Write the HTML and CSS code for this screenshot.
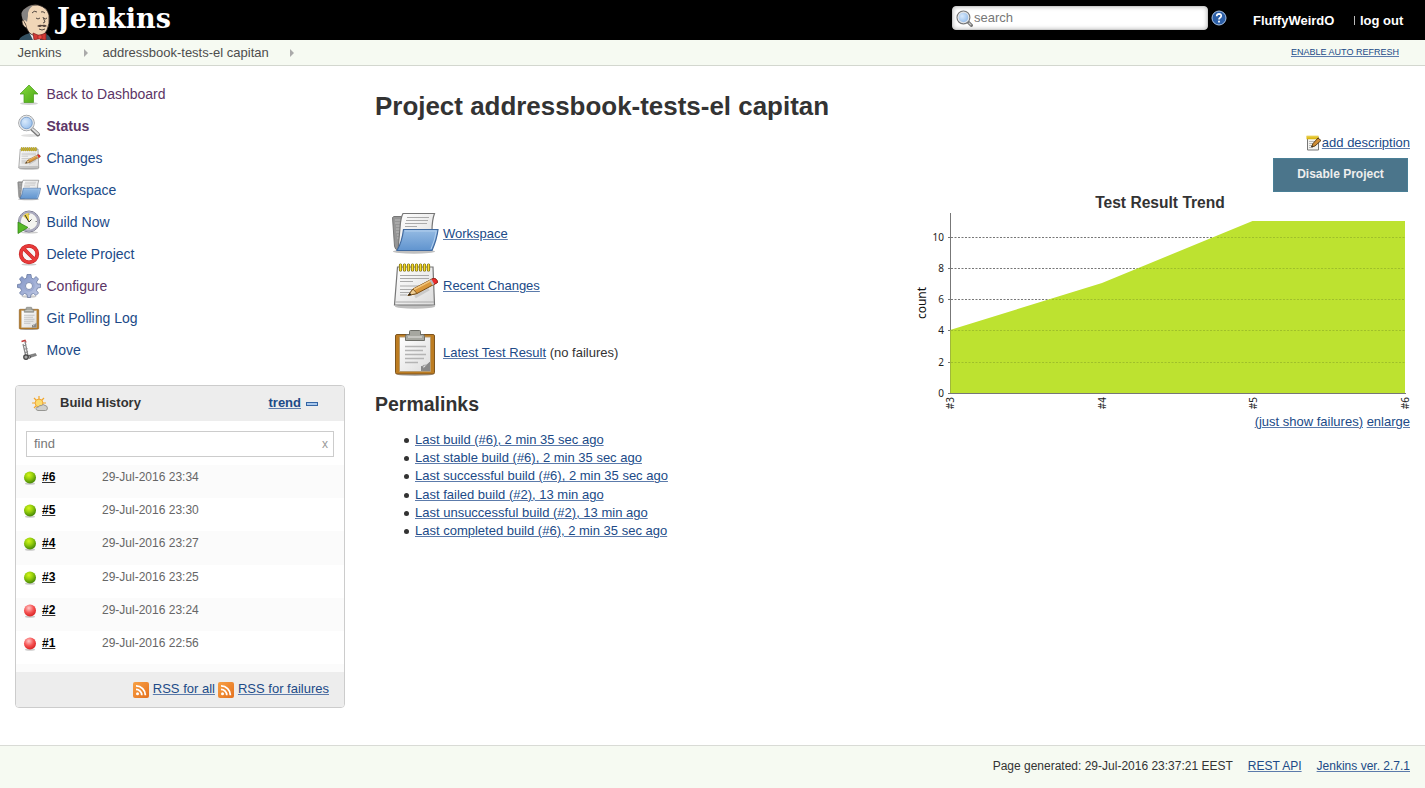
FILE: index.html
```html
<!DOCTYPE html>
<html lang="en">
<head>
<meta charset="utf-8">
<title>addressbook-tests-el capitan [Jenkins]</title>
<link rel="stylesheet" href="styles.css">
</head>
<body>
<svg class="defs" width="0" height="0" aria-hidden="true">
  <defs>
    <linearGradient id="paper" x1="0" y1="0" x2="1" y2="1"><stop offset="0" stop-color="#fff"/><stop offset="1" stop-color="#dcdcdc"/></linearGradient>
    <linearGradient id="folderBlue" x1="0" y1="0" x2="0" y2="1"><stop offset="0" stop-color="#95bbe3"/><stop offset="1" stop-color="#6094cf"/></linearGradient>
    <linearGradient id="arrowGreen" x1="0" y1="0" x2="1" y2="1"><stop offset="0" stop-color="#86dc3a"/><stop offset="1" stop-color="#4aa616"/></linearGradient>
    <linearGradient id="gearBlue" x1="0" y1="0" x2="1" y2="1"><stop offset="0" stop-color="#7d91c4"/><stop offset="1" stop-color="#c3cce6"/></linearGradient>
    <linearGradient id="rssOrange" x1="0" y1="0" x2="1" y2="1"><stop offset="0" stop-color="#f8a145"/><stop offset="1" stop-color="#e4701e"/></linearGradient>
    <radialGradient id="ballGreen" cx=".4" cy=".3" r=".65"><stop offset="0" stop-color="#d5f51c"/><stop offset=".5" stop-color="#96cf0c"/><stop offset="1" stop-color="#4f8f08"/></radialGradient>
    <radialGradient id="ballRed" cx=".4" cy=".3" r=".65"><stop offset="0" stop-color="#ffc9c9"/><stop offset=".6" stop-color="#f65454"/><stop offset="1" stop-color="#dd2b2b"/></radialGradient>
    <radialGradient id="lens" cx=".4" cy=".4" r=".6"><stop offset="0" stop-color="#d9eafc"/><stop offset="1" stop-color="#8db8ea"/></radialGradient>

    <symbol id="i-up" viewBox="0 0 48 48">
      <ellipse cx="24" cy="43" rx="18" ry="3" fill="#000" opacity=".18"/>
      <path d="M24 6 42 24H33V41H14V24H6Z" fill="url(#arrowGreen)" stroke="#4c9d20" stroke-width="1.500" stroke-linejoin="round"/>
    </symbol>
    <symbol id="i-search" viewBox="0 0 48 48">
      <ellipse cx="27" cy="43" rx="19" ry="3" fill="#000" opacity=".12"/>
      <path d="M30 30 42 41" stroke="#777" stroke-width="8" stroke-linecap="round"/>
      <path d="M31 30 42 40" stroke="#ddd" stroke-width="4" stroke-linecap="round"/>
      <circle cx="19" cy="18" r="15.500" fill="url(#lens)" stroke="#999" stroke-width="2"/>
      <circle cx="19" cy="18" r="13.500" fill="none" stroke="#e6e6e6" stroke-width="3"/>
      <circle cx="19" cy="18" r="11.500" fill="none" stroke="#7297c4" stroke-width="1.500"/>
    </symbol>
    <symbol id="i-lens" viewBox="0 0 16 16">
      <path d="M11 11 14.500 14.500" stroke="#777" stroke-width="3" stroke-linecap="round"/>
      <path d="M12 12 14.300 14.300" stroke="#ccc" stroke-width="1"/>
      <circle cx="7" cy="7" r="6" fill="url(#lens)" stroke="#777" stroke-width="1.200"/>
      <circle cx="7" cy="7" r="5" fill="none" stroke="#e6e6e6" stroke-width="1"/>
    </symbol>
    <symbol id="i-notes" viewBox="0 0 48 48">
      <ellipse cx="24" cy="45.500" rx="20" ry="2.200" fill="#000" opacity=".25"/>
      <path d="M6.500 6H42L43.500 44H3.500Z" fill="url(#paper)" stroke="#777" stroke-width="1.200"/>
      <path d="M4.500 41H43" stroke="#aaa" stroke-width="1.200"/>
      <path d="M9 14.500H38M9 17.500H38M9 20.500H22M9 25H34M9 28.500H30M9 31.500H20M9 34H16" stroke="#aaa" stroke-width="1"/>
      <path d="M9.500 4V9M13.500 4V9M17.500 4V9M21.500 4V9M25.500 4V9M29.500 4V9M33.500 4V9M37.500 4V9" stroke="#6c5d05" stroke-width="3.200" stroke-linecap="round"/>
      <path d="M9.500 4V9M13.500 4V9M17.500 4V9M21.500 4V9M25.500 4V9M29.500 4V9M33.500 4V9M37.500 4V9" stroke="#f6dc2e" stroke-width="1.800" stroke-linecap="round"/>
      <path d="M24 36 38 28" stroke="#000" stroke-width="3" opacity=".12"/>
      <path d="M17 34.500 22 28 42 17.500Q46 17 46.500 21.500L26 32.500Z" fill="#d9973b" stroke="#7a4b10" stroke-width="1"/>
      <path d="M22 29 40 19.500" stroke="#f2c57c" stroke-width="1.500"/>
      <path d="M40 18.600 42 17.500Q46 17 46.500 21.500L43 23.500Z" fill="#ee2c2c" stroke="#9b2222" stroke-width=".8"/>
      <path d="M38.500 19.400 40.500 18.300 43.300 23 41.500 24.200Z" fill="#bbb"/>
      <path d="M17 34.500 22 28 26 32.500Z" fill="#f0cf96" stroke="#6b4513" stroke-width=".8"/>
      <path d="M17 34.500 19 32 20.300 33.800Z" fill="#222"/>
    </symbol>
    <symbol id="i-folder" viewBox="0 0 48 48">
      <ellipse cx="23" cy="42.500" rx="21" ry="2.200" fill="#000" opacity=".25"/>
      <path d="M1.500 8.500 3 7.500H12L14 41H7Q4 41 3.500 37Z" fill="#969696" stroke="#777"/>
      <path d="M4 11H10M4 14H10M5 17H10M5 20H10M5 23H10M6 26H10M6 29H10" stroke="#bbb" stroke-width="1"/>
      <path d="M12 4.500H43.500Q41 11 41 22L14 41H7L9 19Q9.500 9 12 4.500Z" fill="url(#paper)" stroke="#777" stroke-width="1.200"/>
      <path d="M16 8.500H38M15 11.500H37M14 14.500H36M14 17.500H26" stroke="#aaa" stroke-width="1"/>
      <path d="M12.500 20.500H47Q46 30 41 41.500H6Q11 33 12.500 20.500Z" fill="url(#folderBlue)" stroke="#3f699f" stroke-width="1.200"/>
      <path d="M14 22H45.300Q44 31 40 40" fill="none" stroke="#b2cfee" stroke-width="1"/>
    </symbol>
    <symbol id="i-clip" viewBox="0 0 48 48">
      <ellipse cx="24" cy="46.500" rx="18" ry="1.500" fill="#000" opacity=".3"/>
      <rect x="4.500" y="6.500" width="39" height="39.500" rx="1.500" fill="#bd7d22" stroke="#7d5520"/>
      <path d="M8.500 9H39.500V43.500H8.500Z" fill="url(#paper)" stroke="#b99c70"/>
      <path d="M14 18.500H35M14 22.500H32M14 26.500H35M14 30.500H33M14 34.500H27" stroke="#b4b4b4" stroke-width="1.500"/>
      <path d="M30 43V38Q35 39 39 34V43Z" fill="#888"/>
      <path d="M30 43Q33 42 32 37.500 36 38 39 34Z" fill="#ddd" stroke="#888" stroke-width=".7"/>
      <path d="M18.500 6.500V3.500Q18.500 2.500 19.500 2.500H28.500Q29.500 2.500 29.500 3.500V6.500H32Q33.500 6.500 33.500 8.500V12.500H14.500V8.500Q14.500 6.500 16 6.500Z" fill="#a6a7a0" stroke="#6d6e68"/>
      <path d="M17 9H31" stroke="#d0d0cc" stroke-width="1.500"/>
    </symbol>
    <symbol id="i-clock" viewBox="0 0 48 48">
      <ellipse cx="25" cy="45" rx="17" ry="2" fill="#000" opacity=".2"/>
      <circle cx="24" cy="23" r="21" fill="#f4f4f0" stroke="#77778c" stroke-width="2"/>
      <circle cx="24" cy="23" r="18.500" fill="none" stroke="#a9a9bd" stroke-width="4"/>
      <path d="M24 23 12 12Q17 6 24 6Z" fill="#ecd047"/>
      <path d="M24 24 16 10M24 24 29 19" stroke="#333" stroke-width="2"/>
      <path d="M24 7V10M40 23H37M24 39V36" stroke="#888" stroke-width="2"/>
      <path d="M2 24 22 35 2 47Z" fill="#56b928" stroke="#2d8211" stroke-width="1.500" stroke-linejoin="round"/>
    </symbol>
    <symbol id="i-delete" viewBox="0 0 48 48">
      <ellipse cx="24" cy="45" rx="15" ry="2" fill="#000" opacity=".2"/>
      <circle cx="24" cy="24" r="16.500" fill="#f7f7f7" stroke="#c02020" stroke-width="7.500"/>
      <path d="M13 13 35 35" stroke="#c02020" stroke-width="7"/>
      <circle cx="24" cy="24" r="16.500" fill="none" stroke="#e83a3a" stroke-width="5.500"/>
      <path d="M12 12 36 36" stroke="#e83a3a" stroke-width="5"/>
    </symbol>
    <symbol id="i-gear" viewBox="0 0 48 48">
      <ellipse cx="24" cy="45" rx="15" ry="2.500" fill="#000" opacity=".2"/>
      <path fill-rule="evenodd" d="M20 1H28L29 8 33 10 38 5 43 10 39 16 41 20 47 20V27L41 28 39 33 43 38 38 43 33 39 28 41 27 47H21L20 41 15 39 10 43 5 38 9 33 7 28 1 27V21L7 20 9 16 5 10 10 5 15 10 19 8ZM24 17A7 7 0 1 0 24 31A7 7 0 1 0 24 17Z" fill="url(#gearBlue)" stroke="#66779f" stroke-width="1.500" stroke-linejoin="round"/>
      <circle cx="24" cy="24" r="10" fill="none" stroke="#95a5d0" stroke-width="2"/>
    </symbol>
    <symbol id="i-move" viewBox="0 0 48 48">
      <path d="M9 7 16 5 18 9" fill="none" stroke="#c43b3b" stroke-width="3"/>
      <path d="M16 7 22 36M12 12 18 38M14 15 19 14M15 22 21 21M17 29 22 27" fill="none" stroke="#888" stroke-width="2.500"/>
      <path d="M22 35 37 31 39 35 23 40Z" fill="#888" stroke="#555"/>
      <circle cx="18" cy="38" r="4.500" fill="#aaa" stroke="#444" stroke-width="2.500"/>
      <circle cx="25" cy="38" r="2.500" fill="#aaa" stroke="#444" stroke-width="1.500"/>
    </symbol>
    <symbol id="i-weather" viewBox="0 0 16 16">
      <path d="M7 0V3M2 2 4 4M12 2 10 4M0 7H3M14 7H11M2 12 4 10" stroke="#f1a72b" stroke-width="1.200"/>
      <circle cx="7" cy="7" r="3.900" fill="#fbdc6e" stroke="#f2a431"/>
      <path d="M6 14.500Q3.700 14.300 4 12.300 4.500 10.800 6.500 11 7 9 9.500 9.500 11 7.500 13 9.500 15 9.300 15.400 12 15.500 14.500 13.500 14.500Z" fill="#d0d0cd" stroke="#8e8e8a" stroke-width=".9"/>
    </symbol>
    <symbol id="i-green" viewBox="0 0 14 14"><ellipse cx="7" cy="12.700" rx="5" ry="1.100" opacity=".2"/><circle cx="7" cy="6.500" r="6" fill="url(#ballGreen)"/></symbol>
    <symbol id="i-red" viewBox="0 0 14 14"><ellipse cx="7" cy="12.700" rx="5" ry="1.100" opacity=".2"/><circle cx="7" cy="6.500" r="6" fill="url(#ballRed)"/></symbol>
    <symbol id="i-rss" viewBox="0 0 16 16">
      <rect width="16" height="16" rx="2" fill="url(#rssOrange)"/>
      <circle cx="4.500" cy="11.700" r="1.500" fill="#fff"/>
      <path d="M3 7.400A5.800 5.800 0 0 1 8.800 13.200M3 3.800A9.400 9.400 0 0 1 12.400 13.200" fill="none" stroke="#fff" stroke-width="1.800"/>
    </symbol>
    <symbol id="i-edit" viewBox="0 0 16 16">
      <path d="M1.500 2H12.500V15H1.500Z" fill="#f3f3f0" stroke="#777"/>
      <path d="M3 6.500H10M3 8.500H8M3 10.500H7M3 12.500H7" stroke="#aaa" stroke-width=".8"/>
      <path d="M.5 2.500H12.500" stroke="#dcb814" stroke-width="3.500"/>
      <path d="M2 .8V2.500M4 .8V2.500M6 .8V2.500M8 .8V2.500M10 .8V2.500M12 .8V2.500" stroke="#fff3a8" stroke-width=".7"/>
      <path d="M5.500 12 7 8.500 12 3 15 5.500 9 11Z" fill="#cf8d35" stroke="#513510" stroke-width=".9"/>
      <path d="M5.500 12 6 10.500 7.200 11.500Z" fill="#222"/>
    </symbol>
  </defs>
</svg>

<header class="topbar">
  <a class="brand">
    <svg class="butler" viewBox="0 0 35 36" width="35" height="36">
      <path d="M1 36Q2 32 12 29H26Q32 31 33 36Z" fill="#335061"/>
      <path d="M11 28 22 27V36H15Z" fill="#eee"/>
      <path d="M5 16Q2 7 8 4 13 0 20 1 29 3 31 11 32 20 29 26 26 32 20 32 12 32 9 25 8 20 5 16Z" fill="#f0d6b7" stroke="#2b2523" stroke-width=".8"/>
      <path d="M5 16Q1 7 8 4 11 1.500 15 1.500 9 6 10 12L9 18Q8 16 5 16Z" fill="#858382"/>
      <path d="M5 16Q3 17 5 21 7 24 9 24" fill="#f0d6b7" stroke="#2b2523" stroke-width=".7"/>
      <path d="M14 9Q16 6 19 8M23 8Q25 7 27 9M18 14Q20 16 22 14M26 14Q27 16 29 14M25 13 27 18 25 19M21 25Q24 27 27 25" fill="none" stroke="#2b2523" stroke-width=".8"/>
      <path d="M19 22Q22 20 24 21 27 20 29 22 26 24 24 22 22 24 19 22Z" fill="#55443c"/>
      <path d="M15 29 21 31.500 28 29V36H26L22 34.500 16 36Z" fill="#d33833" stroke="#801f1d" stroke-width=".7"/>
      <rect x="20" y="31" width="4" height="4" rx="1" fill="#ee4a44" stroke="#801f1d" stroke-width=".6"/>
    </svg>
    <span class="wordmark">Jenkins</span>
  </a>
  <div class="searchbox"><svg width="17" height="17"><use href="#i-lens"/></svg><span>search</span></div>
  <svg class="help" viewBox="0 0 16 16" width="16" height="16"><circle cx="8" cy="8" r="7" fill="#2c5fa8" stroke="#a9c3e6" stroke-width="1"/><path d="M5.700 6.200Q5.800 3.900 8 3.900 10.300 4 10.200 6 10.100 7.200 8.800 7.900 8 8.400 8 9.600" fill="none" stroke="#fff" stroke-width="1.700"/><rect x="7.100" y="10.700" width="1.800" height="1.800" fill="#fff"/></svg>
  <b class="user">FluffyWeirdO</b>
  <span class="logout"><i></i><b>log out</b></span>
</header>

<nav class="crumbs">
  <span class="crumb-home">Jenkins</span><i class="tri"></i>
  <span class="crumb-job">addressbook-tests-el capitan</span><i class="tri"></i>
  <a class="refresh">ENABLE AUTO REFRESH</a>
</nav>

<div class="page">
  <aside class="side">
    <ul class="tasks">
      <li class="visited"><svg><use href="#i-up"/></svg><span>Back to Dashboard</span></li>
      <li class="visited current"><svg><use href="#i-search"/></svg><span>Status</span></li>
      <li><svg><use href="#i-notes"/></svg><span>Changes</span></li>
      <li><svg><use href="#i-folder"/></svg><span>Workspace</span></li>
      <li><svg><use href="#i-clock"/></svg><span>Build Now</span></li>
      <li><svg><use href="#i-delete"/></svg><span>Delete Project</span></li>
      <li class="visited"><svg><use href="#i-gear"/></svg><span>Configure</span></li>
      <li><svg><use href="#i-clip"/></svg><span>Git Polling Log</span></li>
      <li><svg><use href="#i-move"/></svg><span>Move</span></li>
    </ul>
    <section class="history">
      <div class="history-head"><svg width="16" height="16"><use href="#i-weather"/></svg><b>Build History</b><a>trend</a><i class="collapse"></i></div>
      <div class="find"><span>find</span><span class="clear">x</span></div>
      <div class="builds">
        <div class="build"><svg><use href="#i-green"/></svg><a>#6</a><span>29-Jul-2016 23:34</span></div>
        <div class="build"><svg><use href="#i-green"/></svg><a>#5</a><span>29-Jul-2016 23:30</span></div>
        <div class="build"><svg><use href="#i-green"/></svg><a>#4</a><span>29-Jul-2016 23:27</span></div>
        <div class="build"><svg><use href="#i-green"/></svg><a>#3</a><span>29-Jul-2016 23:25</span></div>
        <div class="build"><svg><use href="#i-red"/></svg><a>#2</a><span>29-Jul-2016 23:24</span></div>
        <div class="build"><svg><use href="#i-red"/></svg><a>#1</a><span>29-Jul-2016 22:56</span></div>
      </div>
      <div class="history-foot"><svg><use href="#i-rss"/></svg><a>RSS for all</a><svg><use href="#i-rss"/></svg><a>RSS for failures</a></div>
    </section>
  </aside>

  <main class="main">
    <h1>Project addressbook-tests-el capitan</h1>
    <div class="columns">
      <div class="left">
        <div class="link-row"><svg><use href="#i-folder"/></svg><span><a>Workspace</a></span></div>
        <div class="link-row"><svg><use href="#i-notes"/></svg><span><a>Recent Changes</a></span></div>
        <div class="link-row result"><svg><use href="#i-clip"/></svg><span><a>Latest Test Result</a> (no failures)</span></div>
        <h2>Permalinks</h2>
        <ul class="permalinks">
          <li><a>Last build (#6), 2 min 35 sec ago</a></li>
          <li><a>Last stable build (#6), 2 min 35 sec ago</a></li>
          <li><a>Last successful build (#6), 2 min 35 sec ago</a></li>
          <li><a>Last failed build (#2), 13 min ago</a></li>
          <li><a>Last unsuccessful build (#2), 13 min ago</a></li>
          <li><a>Last completed build (#6), 2 min 35 sec ago</a></li>
        </ul>
      </div>
      <div class="right">
        <div class="describe"><svg width="16" height="16"><use href="#i-edit"/></svg><a>add description</a></div>
        <button class="disable">Disable Project</button>
        <div class="trend-title">Test Result Trend</div>
        <svg class="chart" width="500" height="200" viewBox="0 0 500 200">
          <g class="grid"><path d="M41 24.500H495M41 55.500H495M41 86.500H495M41 117.500H495M41 149.500H495"/></g>
          <path class="area" d="M40 117 192 70 342.500 8H495V180H40Z"/>
          <g class="grid faint"><path d="M307 24.500H495M229 55.500H495M142 86.500H495M41 117.500H495M41 149.500H495"/></g>
          <path class="axis" d="M40.500 0V180.500H496M38 24.500H41M38 55.500H41M38 86.500H41M38 117.500H41M38 149.500H41M38 180.500H41"/>
          <path class="area-edge" d="M40.500 117V180"/>
          <g class="labels" text-anchor="end">
            <text x="34" y="28">10</text><text x="34" y="59">8</text><text x="34" y="90">6</text><text x="34" y="121">4</text><text x="34" y="153">2</text><text x="34" y="184">0</text>
            <text transform="translate(44 184) rotate(-90)">#3</text>
            <text transform="translate(196 184) rotate(-90)">#4</text>
            <text transform="translate(346.500 184) rotate(-90)">#5</text>
            <text transform="translate(498.500 184) rotate(-90)">#6</text>
          </g>
          <text class="axis-name" text-anchor="middle" transform="translate(15.500 90) rotate(-90)">count</text>
        </svg>
        <div class="chart-links"><a>(just show failures)</a> <a>enlarge</a></div>
      </div>
    </div>
  </main>
</div>

<footer class="footer"><span>Page generated: 29-Jul-2016 23:37:21 EEST</span><a>REST API</a><a>Jenkins ver. 2.7.1</a></footer>
</body>
</html>
```
FILE: styles.css
```css
* { box-sizing: border-box; }
body {
  margin: 0;
  height: 788px;
  overflow: hidden;
  display: flex;
  flex-direction: column;
  background: #fff;
  color: #333;
  font: 13px/18px "Liberation Sans", Arial, sans-serif;
}
svg { display: block; flex: none; }
.defs { position: absolute; }
a { color: #204a87; text-decoration: underline; text-decoration-thickness: 1px; text-decoration-color: #5c7bab; text-underline-offset: 1px; white-space: nowrap; }

.topbar { height: 40px; flex: none; background: #000; color: #fff; display: flex; align-items: flex-start; padding-left: 18px; }
.brand { display: flex; text-decoration: none; color: #fff; flex: 1; }
.butler { margin-top: 4px; }
.wordmark { font: bold 27px/38px "DejaVu Serif", serif; margin-left: 4px; letter-spacing: .1px; }
.searchbox {
  width: 256px; height: 24px; margin-top: 6px; padding-left: 3px;
  display: flex; align-items: center; gap: 1px;
  background: #fff; border-radius: 4px; border: 1px solid #ccc;
  box-shadow: inset 0 0 4px #bbb; color: #777;
}
.help { margin: 10px 26px 0 3px; }
.user { width: 100px; line-height: 18px; margin-top: 12px; }
.logout { width: 72px; margin-top: 12px; display: flex; align-items: center; }
.logout i { width: 1px; height: 9px; background: #bbb; margin: -2px 5px 0 1px; }

.crumbs { height: 26px; flex: none; background: #f6faf2; border-bottom: 1px solid #d3d7cf; display: flex; align-items: center; padding: 0 26px 0 17.500px; color: #4d4d4d; }
.crumb-home { width: 66px; }
.crumb-job { margin-left: 15px; width: 187px; }
.tri { border-left: 4px solid #aaa; border-top: 4px solid transparent; border-bottom: 4px solid transparent; margin-top: 1px; }
.refresh { margin-left: auto; font-size: 9.030px; margin-top: -1px; }

.page { flex: 1; display: flex; align-items: flex-start; }
.side { width: 360px; flex: none; padding: 12px 15px 0; }
.tasks { list-style: none; margin: 0; padding: 0 0 0 2px; }
.tasks li { height: 32px; display: flex; align-items: center; gap: 5.500px; font-size: 14px; color: #204a87; }
.tasks svg { width: 24px; height: 24px; }
.tasks .visited { color: #5c3566; }
.tasks .current { font-weight: bold; }

.history { margin-top: 19px; height: 323px; border: 1px solid #ccc; border-radius: 4px; overflow: hidden; display: flex; flex-direction: column; }
.history-head { height: 35px; background: #ededed; display: flex; align-items: center; padding: 0 26px 0 15px; }
.history-head svg { margin-left: 1px; }
.history-head b { margin: -2px 0 0 12px; flex: 1; }
.history-head a { font-weight: bold; margin-top: -2px; }
.collapse { width: 12px; height: 4px; margin-left: 5px; margin-top: 1px; border: 1px solid #3465a4; background: #a9c8ec; }
.find { margin: 10px 10px 8px; height: 26px; border: 1px solid #ccc; display: flex; justify-content: space-between; align-items: center; padding: 0 5px 0 7px; color: #777; }
.clear { font-size: 12px; margin-top: -1px; color: #999; }
.builds { flex: 1; background: #fbfbfb; }
.build { height: 33.200px; padding: 3px 0 0 7px; display: flex; align-items: flex-start; font-size: 12px; color: #666; }
.build:nth-child(even) { background: #fff; }
.build svg { width: 14px; height: 14px; margin-top: 3px; }
.build a { width: 60px; margin-left: 5px; font-weight: bold; color: #000; text-decoration-color: #333; }
.history-foot { height: 35px; background: #ededed; display: flex; align-items: center; justify-content: flex-end; padding-right: 15px; }
.history-foot svg { width: 16px; height: 16px; margin: 1px 4px 0 3px; }
.history-foot a { margin-top: -2px; }

.main { flex: 1; padding: 24px 15px 0; }
h1 { margin: 0; font-size: 25.950px; line-height: 32px; }
.columns { display: flex; justify-content: space-between; }
.left { padding-top: 85px; }
.link-row { height: 52px; padding-left: 16px; display: flex; align-items: center; }
.link-row svg { width: 48px; height: 48px; margin-right: 4px; }
.link-row span { margin-top: 2px; }
.result { margin-top: 15px; }
h2 { margin: 14px 0 0; font-size: 19.500px; line-height: 24px; }
.permalinks { margin: 15px 0 0; padding-left: 40px; list-style: none; }
.permalinks li { line-height: 18.200px; }
.permalinks li::before { content: ""; display: inline-block; width: 5px; height: 5px; margin: 0 6px 1px -11px; border-radius: 50%; background: #333; }

.right { width: 500px; padding-top: 12px; display: flex; flex-direction: column; align-items: flex-end; }
.describe { display: flex; align-items: center; }
.disable { width: 135px; height: 34px; margin: 6px 2px 0 0; padding: 0 0 3px; border: 1px solid #4a7f96; background: #4b758b; color: #eee; font: bold 12px "Liberation Sans", Arial, sans-serif; }
.trend-title { width: 500px; height: 21px; text-align: center; font: bold 15.600px/22px "Liberation Sans", Arial, sans-serif; }
.grid { fill: none; stroke: #777; stroke-width: 1; stroke-dasharray: 2 1.500; }
.faint { stroke: #9fc02a; }
.area { fill: #bde230; }
.area-edge { stroke: #a0b83a; }
.axis { fill: none; stroke: #777; }
.labels { font: 10px "Noto Sans", sans-serif; fill: #222; }
.axis-name { font: 12px "Noto Sans", sans-serif; fill: #111; }

.footer { height: 43px; flex: none; background: #f6faf2; border-top: 1px solid #d9dbd6; display: flex; justify-content: flex-end; gap: 15px; padding: 11px 15px 0; font-size: 12px; }
```
